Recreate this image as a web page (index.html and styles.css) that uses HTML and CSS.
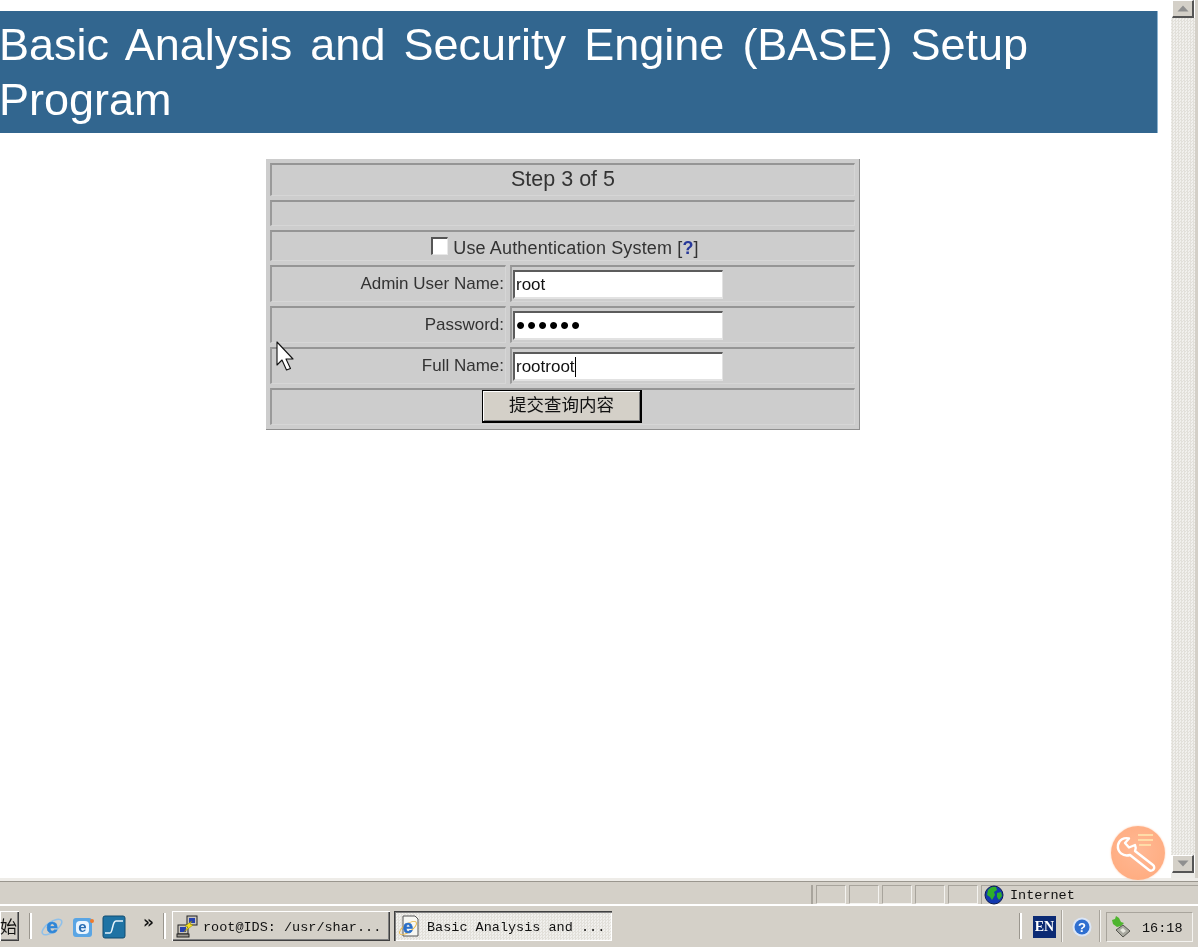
FILE: index.html
```html
<!DOCTYPE html>
<html lang="en">
<head>
<meta charset="utf-8">
<title>Basic Analysis and Security Engine (BASE) Setup Program</title>
<link rel="stylesheet" href="styles.css">
</head>
<body>
<div class="window">
  <main class="page">
    <h1 class="banner">Basic Analysis and Security Engine (BASE) Setup Program</h1>
    <form class="form-wrap">
      <table class="setup">
        <colgroup><col class="c1"><col class="c2"></colgroup>
        <tr class="r-step"><td colspan="2" class="center step">Step 3 of 5</td></tr>
        <tr class="r-empty"><td colspan="2"></td></tr>
        <tr class="r-check"><td colspan="2" class="auth"><div class="auth-inner"><input type="checkbox" class="check"><span>Use Authentication System [<a class="help" href="#">?</a>]</span></div></td></tr>
        <tr class="r-field"><td class="label">Admin User Name:</td><td class="value"><input class="text" type="text" value="root"></td></tr>
        <tr class="r-field"><td class="label">Password:</td><td class="value"><input class="text pass" type="password" value="rootro"></td></tr>
        <tr class="r-field"><td class="label">Full Name:</td><td class="value"><input class="text caret" type="text" value="rootroot"></td></tr>
        <tr class="r-submit"><td colspan="2" class="center"><button class="submit" type="button">提交查询内容</button></td></tr>
      </table>
    </form>
  </main>
  <div class="scrollbar">
    <div class="sb-btn"><svg width="12" height="7" viewBox="0 0 12 7"><path d="M6 0.5 11.5 6.5H.5Z" fill="#8f8f8f"/></svg></div>
    <div class="sb-track"></div>
    <div class="sb-btn"><svg width="12" height="7" viewBox="0 0 12 7"><path d="M6 6.5 11.5 .5H.5Z" fill="#8f8f8f"/></svg></div>
    <div class="sb-foot"></div>
  </div>
  <div class="sliver"></div>
</div>

<div class="statusbar">
  <div class="st-fill"></div>
  <div class="st-cell"></div><div class="st-cell"></div><div class="st-cell"></div><div class="st-cell"></div><div class="st-cell"></div>
  <div class="st-zone">
    <svg width="22" height="20" viewBox="0 0 20 20"><circle cx="10" cy="10" r="9" fill="#1238b0"/><path d="M4 5c2-3 6-4 8-3l1 3-3 2 1 3-3 5-2-3-3-2Z" fill="#2fae2a"/><path d="M13 8l4-1 1 4-3 4-2-3Z" fill="#2fae2a"/><circle cx="10" cy="10" r="9" fill="none" stroke="#0b1c50"/></svg>
    <span>Internet</span>
  </div>
</div>

<div class="taskbar">
  <button class="tb-btn start" type="button">始</button>
  <i class="grip g1"></i>
  <div class="quick">
    <svg class="q" width="24" height="24" viewBox="0 0 24 24"><ellipse cx="12" cy="12" rx="11.500" ry="5" transform="rotate(-35 12 12)" fill="none" stroke="#8fc0ea" stroke-width="1.500"/><text x="12" y="18" class="ie" text-anchor="middle">e</text></svg>
    <svg class="q" width="24" height="24" viewBox="0 0 24 24"><rect x="2" y="3" width="19" height="19" rx="3" fill="#5aa5e4"/><rect x="5" y="6" width="13" height="13" rx="4" fill="#eaf5ff"/><text x="11.500" y="17" class="oe" text-anchor="middle">e</text><circle cx="21" cy="6" r="2" fill="#f07a2a"/></svg>
    <svg class="q" width="24" height="24" viewBox="0 0 24 24"><rect x="1" y="1" width="22" height="22" rx="2" fill="#1f73a4" stroke="#114c70"/><path d="M3 18h5c3 0 2-12 6-12h7" fill="none" stroke="#e6f4fb" stroke-width="1.600"/></svg>
    <span class="more">»</span>
  </div>
  <i class="grip g2"></i>
  <button class="tb-btn task" type="button">
    <svg width="24" height="24" viewBox="0 0 24 24"><rect x="12" y="2" width="10" height="9" fill="#c9c5bd" stroke="#222"/><rect x="14" y="4" width="6" height="5" fill="#2540b0"/><rect x="3" y="11" width="10" height="9" fill="#c9c5bd" stroke="#222"/><rect x="5" y="13" width="6" height="5" fill="#2540b0"/><rect x="2" y="20" width="12" height="3" fill="#9a968e" stroke="#222"/><path d="M17 7 10 12l3 1-4 5 9-7-3-1Z" fill="#f5e020" stroke="#8a7a00" stroke-width=".5"/></svg>
    <span class="task-label">root@IDS: /usr/shar...</span>
  </button>
  <button class="tb-btn task active" type="button">
    <svg width="24" height="24" viewBox="0 0 24 24"><path d="M6 2h12l3 3v17H6Z" fill="#f7f7f2" stroke="#555"/><ellipse cx="11" cy="14" rx="10" ry="4" transform="rotate(-35 11 14)" fill="none" stroke="#e8b84a"/><text x="11" y="19" class="ie small" text-anchor="middle">e</text></svg>
    <span class="task-label">Basic Analysis and ...</span>
  </button>
  <div class="tb-spacer"></div>
  <i class="grip g3"></i>
  <div class="lang">EN</div>
  <i class="sep s1"></i>
  <svg class="helpicon" width="20" height="20" viewBox="0 0 20 20"><circle cx="10" cy="10" r="9.500" fill="#dbe6f7"/><circle cx="10" cy="10" r="7.500" fill="#2f6fd0"/><text x="10" y="14.500" class="qm" text-anchor="middle">?</text></svg>
  <i class="sep s2"></i>
  <div class="tray">
    <svg width="20" height="24" viewBox="0 0 20 24"><path d="M1 5l3-1 1-3 3 2 2 4 3 1-3 3-4 1-4-3Z" fill="#4fb52f"/><path d="M5 15l7-5 7 6-7 6Z" fill="#a9a9a0" stroke="#55554f"/><path d="M9 15l3-2 3 3-3 2Z" fill="#e8e8e0"/></svg>
    <span class="task-label">16:18</span>
  </div>
</div>

<div class="tool-badge">
  <svg width="54" height="54" viewBox="0 0 54 54"><path d="M27 9h15M27 14h15M28 19h12" fill="none" stroke="#ffdca8" stroke-width="2"/><path d="M18 12.500 14 17 18 21.500 24 19C25 21 25 23 24 25L42 39A3.200 3.200 0 0 1 38 44L19 29C12 31 6 26 7 19 8 14 13 11 18 12.500Z" fill="none" stroke="#fff" stroke-width="2.400" stroke-linejoin="round"/></svg>
</div>
<svg class="pointer" width="18" height="30" viewBox="0 0 18 30"><path d="M1 1V24L6 19 10.500 29 14.500 27.500 10 18H17Z" fill="#fff" stroke="#111" stroke-width="1.100" stroke-linejoin="round"/></svg>
</body>
</html>
```
FILE: styles.css
```css
html, body { margin: 0; padding: 0; background: #fff; }
body {
  position: relative;
  width: 1198px;
  height: 947px;
  overflow: hidden;
  display: flex;
  flex-direction: column;
  background: #fff;
  font-family: "Liberation Sans", Arial, sans-serif;
  filter: blur(0.35px);
}

/* Browser viewport */
.window { display: flex; height: 878px; flex: none; }
.page { width: 1171px; flex: none; padding-top: 11px; box-sizing: border-box; }
.banner {
  margin: 0 0 0 -1px;
  width: 1159px;
  height: 122px;
  box-sizing: border-box;
  padding: 6px 0;
  background: #32668f;
  border-right: 1px solid #8db3d0;
  color: #fff;
  font-size: 45px;
  font-weight: 400;
  line-height: 55px;
  word-spacing: 5.600px;
}
.form-wrap { display: flex; margin: 26px 0 0 266px; }

.setup {
  width: 594px;
  box-sizing: border-box;
  table-layout: fixed;
  border-collapse: separate;
  border-spacing: 4px;
  background: #cdcdcd;
  border-right: 1px solid #8f8f8f;
  border-bottom: 1px solid #8f8f8f;
  color: #333;
  font-size: 17px;
}
.c1 { width: 236px; }
.c2 { width: 345px; }
.setup td {
  padding: 0;
  box-sizing: border-box;
  border-top: 2px solid #959595;
  border-left: 2px solid #9a9a9a;
  border-right: 1px solid #d6d6d6;
  border-bottom: 1px solid #d6d6d6;
}
.r-step td { height: 33px; }
.r-empty td { height: 26px; }
.r-check td { height: 31px; vertical-align: top; }
.r-field td { height: 37px; }
.r-submit td { height: 37px; vertical-align: top; }
.center { text-align: center; }
.setup td.step { font-size: 21.500px; padding-bottom: 2px; }
.auth-inner {
  display: flex;
  justify-content: center;
  align-items: flex-start;
  gap: 5px;
  height: 28px;
  padding-left: 4px;
  font-size: 18px;
  line-height: 20px;
  letter-spacing: 0.150px;
}
.auth-inner span { margin-top: 6px; }
.setup td.label { text-align: right; padding-right: 1px; }
.setup td.value { padding-left: 1px; }

.help { color: #27389a; font-weight: 700; text-decoration: none; }
.check {
  appearance: none;
  flex: none;
  width: 17px;
  height: 18px;
  margin: 5px 0 0;
  box-sizing: border-box;
  background: #fff;
  border-top: 2px solid #555;
  border-left: 2px solid #555;
  border-right: 1px solid #e8e8e8;
  border-bottom: 1px solid #e8e8e8;
}
.text {
  display: block;
  width: 210px;
  height: 29px;
  box-sizing: border-box;
  margin: 0;
  padding: 2px 0 0 1px;
  background-color: #fff;
  border-top: 2px solid #5c5c5c;
  border-left: 2px solid #5c5c5c;
  border-right: 1px solid #e2e2e2;
  border-bottom: 2px solid #e2e2e2;
  outline: none;
  color: #111;
  font-family: "Liberation Sans", Arial, sans-serif;
  font-size: 17px;
}
.pass { font-size: 26px; letter-spacing: 1.900px; padding: 0 0 0 1px; color: #000; }
.caret {
  background-image: linear-gradient(#000, #000);
  background-repeat: no-repeat;
  background-size: 1px 20px;
  background-position: 60px 3px;
}
.submit {
  display: block;
  width: 160px;
  height: 33px;
  margin: 0 auto;
  padding: 0 0 4px;
  position: relative;
  left: -1px;
  background: #d4d0c8;
  border: 1px solid #000;
  border-right-width: 2px;
  border-bottom-width: 2px;
  box-shadow: inset 1px 1px 0 #fff, inset -1px -1px 0 #808080;
  color: #111;
  font-family: "Noto Sans CJK SC", sans-serif;
  font-size: 17.500px;
  line-height: 1;
}

/* Scrollbar */
.scrollbar { width: 24px; flex: none; display: flex; flex-direction: column; align-items: center; }
.sb-btn {
  width: 22px;
  height: 18px;
  box-sizing: border-box;
  flex: none;
  display: flex;
  align-items: center;
  justify-content: center;
  background: #d4d0c8;
  border-top: 1px solid #fff;
  border-left: 1px solid #fff;
  border-right: 2px solid #555;
  border-bottom: 2px solid #555;
}
.sb-track {
  flex: 1;
  width: 100%;
  background-color: #f1f0ed;
  background-image: conic-gradient(#e2e0da 25%, transparent 0 50%, #e2e0da 0 75%, transparent 0);
  background-size: 3px 3px;
}
.sb-foot { height: 5px; width: 100%; background: #ecebe7; flex: none; }
.sliver { flex: 1; background: #d4d0c8; }

/* Status bar */
.statusbar {
  height: 28px;
  flex: none;
  display: flex;
  gap: 3px;
  box-sizing: border-box;
  padding-top: 4px;
  background: #d4d0c8;
  border-top: 3px solid #eeece8;
  border-bottom: 2px solid #fff;
  box-shadow: inset 0 1px 0 #9a968e;
}
.st-fill { flex: 1; border-right: 2px solid #a8a49c; }
.st-cell {
  width: 30px;
  flex: none;
  box-sizing: border-box;
  border-top: 1px solid #a8a49c;
  border-left: 1px solid #a8a49c;
  border-right: 1px solid #f4f3f0;
  border-bottom: 1px solid #f4f3f0;
}
.st-zone {
  width: 217px;
  flex: none;
  box-sizing: border-box;
  display: flex;
  align-items: center;
  gap: 5px;
  padding-left: 1px;
  border-left: 1px solid #a8a49c;
  border-top: 1px solid #a8a49c;
  color: #111;
  font-family: "Liberation Mono", monospace;
  font-size: 13.500px;
}

/* Taskbar */
.taskbar {
  height: 41px;
  flex: none;
  display: flex;
  align-items: center;
  box-sizing: border-box;
  padding-bottom: 5px;
  padding-top: 3px;
  background: #d4d0c8;
  color: #111;
  font-family: "Liberation Mono", monospace;
  font-size: 13.500px;
}
.tb-btn {
  height: 30px;
  flex: none;
  display: flex;
  align-items: center;
  gap: 4px;
  margin: 0;
  padding: 0 0 0 3px;
  box-sizing: border-box;
  background: #d4d0c8;
  border: 0;
  box-shadow: inset 1px 1px 0 #fff, inset -1px -1px 0 #404040, inset -2px -2px 0 #808080;
  color: #111;
  font-family: "Liberation Mono", monospace;
  font-size: 13.500px;
  white-space: nowrap;
}
.task-label { padding-top: 3px; }
.start { width: 19px; padding: 0 2px 0 0; font-family: "Noto Sans CJK SC", sans-serif; font-size: 17px; justify-content: flex-end; }
.task { width: 218px; }
.task.active {
  margin-left: 4px;
  gap: 6px;
  background-color: #f1f0ed;
  background-image: conic-gradient(#e2e0da 25%, transparent 0 50%, #e2e0da 0 75%, transparent 0);
  background-size: 3px 3px;
  box-shadow: inset 1px 1px 0 #404040, inset 2px 2px 0 #808080, inset -1px -1px 0 #fff;
}
.grip {
  flex: none;
  width: 1px;
  height: 26px;
  background: #9a968e;
  border-right: 2px solid #fff;
}
.g1 { margin-left: 10px; }
.g2 { margin-left: 8px; margin-right: 6px; }
.g3 { margin-right: 11px; }
.quick { display: flex; align-items: center; gap: 7px; margin-left: 8px; width: 115px; }
.q { flex: none; margin-top: 2px; }
.ie { fill: #2f86d8; stroke: #2f86d8; stroke-width: 0.600px; font-family: "Liberation Sans", sans-serif; font-size: 21px; font-weight: 700; }
.ie.small { fill: #2a6fc9; stroke: #2a6fc9; font-size: 18px; }
.oe { fill: #2b6fb5; font-family: "Liberation Sans", sans-serif; font-size: 15px; font-weight: 700; }
.more { font-family: "DejaVu Sans", sans-serif; font-size: 17px; font-weight: 700; margin: -8px 0 0 10px; }
.tb-spacer { flex: 1; }
.lang {
  width: 23px;
  height: 22px;
  margin-top: 3px;
  flex: none;
  display: flex;
  align-items: center;
  justify-content: center;
  background: #0b2a74;
  color: #fff;
  font-family: "Liberation Serif", serif;
  font-size: 14px;
  font-weight: 700;
}
.sep { flex: none; width: 1px; height: 32px; background: #a8a49c; border-right: 1px solid #f4f3f0; }
.s1 { margin-left: 5px; margin-right: 9px; }
.s2 { margin-left: 7px; margin-right: 5px; }
.helpicon { flex: none; margin-top: 3px; }
.qm { fill: #fff; font-family: "Liberation Sans", sans-serif; font-size: 13px; font-weight: 700; }
.tray {
  width: 87px;
  height: 30px;
  margin: 2px 5px 0 0;
  flex: none;
  box-sizing: border-box;
  display: flex;
  align-items: center;
  gap: 11px;
  padding-left: 4px;
  border-top: 1px solid #a8a49c;
  border-left: 1px solid #a8a49c;
  border-right: 1px solid #f4f3f0;
  border-bottom: 1px solid #f4f3f0;
}

/* Overlays */
.tool-badge {
  position: absolute;
  left: 1111px;
  top: 826px;
  width: 54px;
  height: 54px;
  border-radius: 50%;
  background: radial-gradient(circle at 50% 45%, #ffb894, #ffa97b);
  box-shadow: 0 0 2px #ffc8a8;
}
.pointer { position: absolute; left: 276px; top: 341px; }
```
